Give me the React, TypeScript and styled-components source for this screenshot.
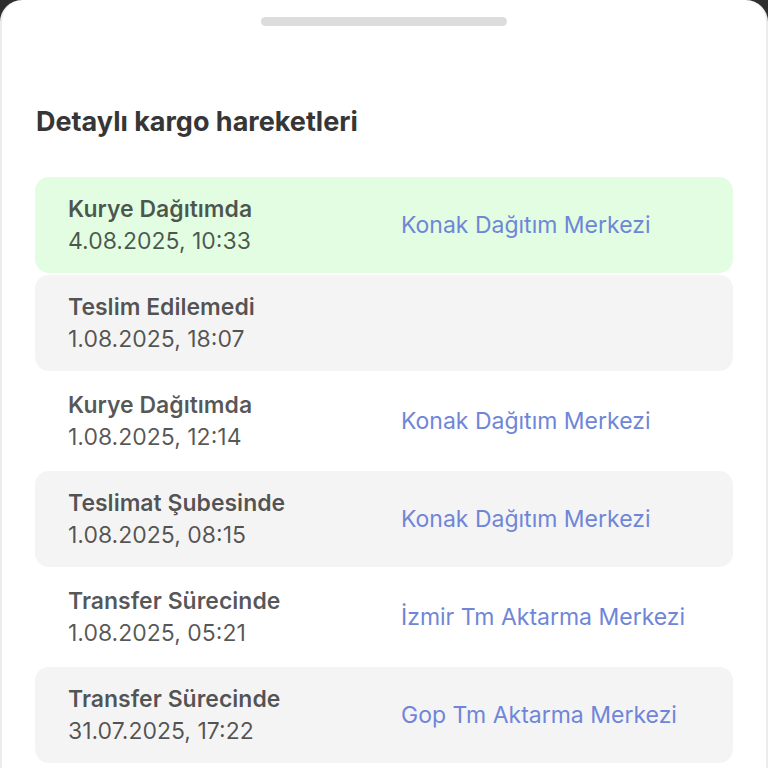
import styled, { createGlobalStyle } from "styled-components";

const GlobalStyle = createGlobalStyle`
  html, body {
    margin: 0;
    padding: 0;
    background: #2e2e2e;
  }
  body {
    font-family: Inter, "Noto Sans", "Liberation Sans", sans-serif;
    -webkit-font-smoothing: antialiased;
  }
`;

const Sheet = styled.div`
  box-sizing: border-box;
  width: 768px;
  height: 768px;
  overflow: hidden;
  background: #ffffff;
  border-radius: 22px 22px 0 0;
  border-left: 2px solid #ececec;
  border-right: 2px solid #ececec;
  padding: 17px 33px 0 33px;
`;

const Handle = styled.div`
  width: 246px;
  height: 9px;
  border-radius: 5px;
  background: #dcdcdc;
  margin: 0 auto;
`;

const Heading = styled.h2`
  margin: 80px 0 0 1px;
  font-size: 27px;
  font-weight: 700;
  line-height: 32px;
  color: #363636;
`;

const List = styled.ul`
  list-style: none;
  margin: 39px 0 0 0;
  padding: 0;
  display: flex;
  flex-direction: column;
  gap: 2px;
`;

type Tone = "green" | "gray" | "plain";

interface RowProps {
  $tone: Tone;
}

const toneBg: Record<Tone, string> = {
  green: "#e2fde2",
  gray: "#f4f4f4",
  plain: "#ffffff",
};

const Row = styled.li<RowProps>`
  height: 96px;
  box-sizing: border-box;
  border-radius: 14px;
  background: ${(p) => toneBg[p.$tone]};
  display: grid;
  grid-template-columns: 333px 1fr;
  align-items: center;
  padding-left: 33px;
`;

const Left = styled.div`
  display: flex;
  flex-direction: column;
`;

const Status = styled.span`
  font-size: 23px;
  font-weight: 600;
  line-height: 32px;
  color: rgba(0, 0, 0, 0.66);
`;

const Time = styled.span`
  font-size: 23px;
  font-weight: 400;
  line-height: 32px;
  color: rgba(0, 0, 0, 0.66);
`;

const Place = styled.span`
  font-size: 23px;
  font-weight: 400;
  color: #6f86d8;
`;

interface Move {
  status: string;
  time: string;
  place?: string;
  tone: Tone;
}

const moves: Move[] = [
  { status: "Kurye Dağıtımda", time: "4.08.2025, 10:33", place: "Konak Dağıtım Merkezi", tone: "green" },
  { status: "Teslim Edilemedi", time: "1.08.2025, 18:07", tone: "gray" },
  { status: "Kurye Dağıtımda", time: "1.08.2025, 12:14", place: "Konak Dağıtım Merkezi", tone: "plain" },
  { status: "Teslimat Şubesinde", time: "1.08.2025, 08:15", place: "Konak Dağıtım Merkezi", tone: "gray" },
  { status: "Transfer Sürecinde", time: "1.08.2025, 05:21", place: "İzmir Tm Aktarma Merkezi", tone: "plain" },
  { status: "Transfer Sürecinde", time: "31.07.2025, 17:22", place: "Gop Tm Aktarma Merkezi", tone: "gray" },
];

function App() {
  return (
    <>
      <GlobalStyle />
      <Sheet>
        <Handle />
        <Heading>Detaylı kargo hareketleri</Heading>
        <List>
          {moves.map((m, i) => (
            <Row key={i} $tone={m.tone}>
              <Left>
                <Status>{m.status}</Status>
                <Time>{m.time}</Time>
              </Left>
              {m.place && <Place>{m.place}</Place>}
            </Row>
          ))}
        </List>
      </Sheet>
    </>
  );
}

export default App;
